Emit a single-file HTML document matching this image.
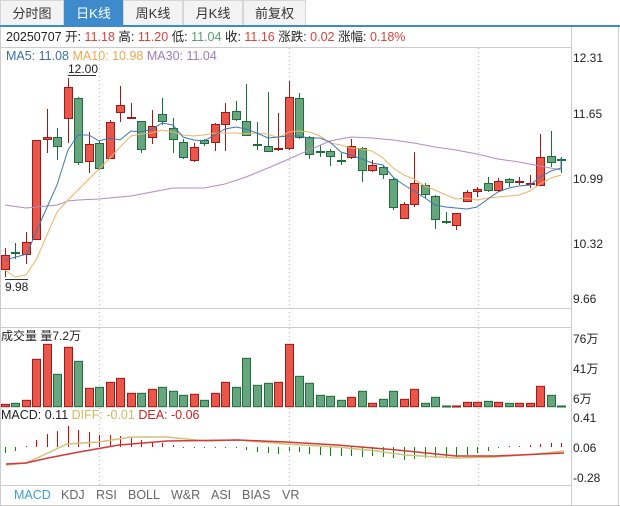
<!DOCTYPE html>
<html><head><meta charset="utf-8"><style>
body{margin:0;width:620px;height:506px;background:#fff;font-family:"Liberation Sans","Noto Sans CJK SC",sans-serif;overflow:hidden;position:relative}
.tab{position:absolute;top:0;height:25px;line-height:25px;text-align:center;font-size:13px;color:#333;background:#f3f3f3;border:1px solid #d6d6d6;border-bottom:none;box-sizing:border-box}
.tab.on{background:#3d8bcb;color:#fff;border-color:#3d8bcb}
#bar{position:absolute;top:25px;left:0;width:620px;height:2px;background:#3d8bcb}
</style></head><body>
<div class="tab" style="left:0;width:64px">分时图</div>
<div class="tab on" style="left:64px;width:59px">日K线</div>
<div class="tab" style="left:123px;width:60px">周K线</div>
<div class="tab" style="left:183px;width:60px">月K线</div>
<div class="tab" style="left:243px;width:63px">前复权</div>
<div id="bar"></div>
<svg id="s" width="620" height="506" style="position:absolute;left:0;top:0" font-family="Liberation Sans, Noto Sans CJK SC, sans-serif"></svg>
<script>
var R='#e8574a',RS='#a01818',G='#66a57e',GS='#1e6e3a';
var C=[[5,'r',255,269,248,277],[15,'g',252,253,243,259],[26,'r',242,254,232,264],[36,'r',140,239,140,239],[47,'r',137,139,109,153],[57,'g',137,146,128,160],[68,'r',87,118,78,143],[78,'g',98,162,97,165],[89,'r',144,161,132,173],[99,'g',143,168,141,170],[110,'r',122,158,120,159],[120,'r',105,112,86,122],[131,'r',117,118,103,118],[141,'g',121,149,121,153],[152,'r',126,137,110,144],[162,'g',114,121,98,125],[173,'g',128,139,118,153],[183,'g',142,157,139,159],[194,'r',147,160,143,162],[204,'g',140,143,139,146],[215,'r',124,142,123,151],[225,'r',112,124,103,151],[236,'g',111,119,101,121],[246,'g',121,135,84,136],[257,'g',144,145,122,150],[268,'g',146,151,92,152],[278,'r',148,149,113,151],[289,'r',97,148,81,150],[299,'g',98,137,93,139],[309,'g',137,154,136,159],[320,'g',151,152,145,157],[330,'g',151,156,149,166],[341,'g',160,161,153,165],[351,'r',146,157,139,159],[362,'g',148,170,147,182],[372,'r',165,170,160,172],[383,'g',167,174,166,179],[393,'g',179,207,178,210],[404,'r',204,218,202,219],[414,'r',183,204,152,207],[425,'g',185,194,183,198],[435,'g',196,219,195,229],[446,'g',221,222,212,224],[456,'r',213,225,213,230],[467,'r',192,201,190,202],[477,'r',189,191,187,197],[488,'g',183,190,177,192],[498,'r',181,190,178,192],[509,'g',179,182,178,187],[519,'r',181,182,177,185],[530,'r',183,184,175,188],[540,'r',157,185,134,186],[551,'g',156,162,131,167],[561,'g',159,160,157,173]];
var V=[['r',253],['g',250],['r',241],['r',118],['r',73],['g',163],['r',82],['g',124],['r',205],['g',202],['r',187],['r',175],['r',220],['g',220],['r',208],['g',202],['g',214],['g',226],['r',223],['g',241],['r',220],['r',187],['g',202],['g',115],['g',196],['g',190],['r',187],['r',73],['g',169],['g',190],['g',226],['g',229],['g',241],['r',232],['g',214],['r',250],['g',238],['g',214],['r',238],['r',208],['g',250],['g',232],['g',258],['r',258],['r',247],['r',247],['g',244],['r',247],['g',250],['r',250],['r',250],['r',199],['g',226],['g',258]];
var M=[-6,-4,1,7,13,16,21,17,15,12,12,11,9,7,5,4,2,-1,-1,-1,-1,-1,-1,-3,-5,-6,-7,-4,-5,-7,-8,-9,-9,-9,-10,-9,-10,-11,-13,-12,-11,-11,-11,-10,-8,-6,-4,-1,1,1,2,3,4,4];
var h='';
function L(x1,y1,x2,y2,c,d){h+='<line x1="'+x1+'" y1="'+y1+'" x2="'+x2+'" y2="'+y2+'" stroke="'+c+'" stroke-width="1"'+(d?' stroke-dasharray="1,3"':'')+'/>';}
function T(x,y,t,c,s,a){h+='<text x="'+x+'" y="'+y+'" fill="'+c+'" font-size="'+(s||12)+'"'+(a?' text-anchor="'+a+'"':'')+'>'+t+'</text>';}
// frame
L(0.5,27,0.5,506,'#ccc');L(618.5,27,618.5,506,'#ccc');L(571.5,27,571.5,506,'#ccc');
L(0,47.5,571,47.5,'#ccc');L(0,308.5,571,308.5,'#ccc');L(0,327.5,571,327.5,'#ccc');L(0,485.5,571,485.5,'#ccc');L(0,505.5,620,505.5,'#ccc');
[99.5,289.5,478.5].forEach(function(x){L(x,48,x,485,'#bbb',1);});
// candles
C.forEach(function(c){var col=c[1]=='r'?R:G,st=c[1]=='r'?RS:GS;L(c[0]+.5,c[4],c[0]+.5,c[5],st);
var hh=Math.max(c[3]-c[2],1);h+='<rect x="'+(c[0]-3.5)+'" y="'+(c[2]+.5)+'" width="8" height="'+hh+'" fill="'+col+'" stroke="'+st+'"/>';});
function P(pts,c,w){h+='<polyline fill="none" stroke="'+c+'" stroke-width="'+(w||1)+'" points="'+pts+'"/>';}
P('5,205 26,208 47,206 57,205 68,201 78,200 99,199 131,196 152,192 173,188 204,188 225,184 246,177 268,168 289,159 309,150 330,141 351,137 372,138 393,140 414,143 435,147 456,150 477,154 498,159 519,162 540,166 561,170','#b38bc6');
P('5,270 15,277 26,275 36,260 47,235 57,212 68,200 78,190 89,179 99,169 110,158 120,147 131,136 141,134 152,133 162,130 173,132 183,135 194,136 204,135 215,133 225,133 236,133 246,134 257,133 268,134 278,138 289,132 299,131 309,132 320,136 330,143 341,145 351,148 362,149 372,151 383,158 393,168 404,175 414,179 425,186 435,190 446,195 456,199 467,198 477,200 488,198 498,197 509,196 519,195 530,191 540,184 551,178 561,175','#f0b266');
P('5,260 27,254 36,232 57,185 68,150 78,135 89,135 99,141 110,138 120,140 131,131 141,132 152,129 162,123 173,125 183,137 194,140 204,141 215,135 225,129 236,127 246,129 257,133 268,138 278,137 289,136 299,136 309,138 320,138 330,142 341,152 351,155 362,159 372,163 383,165 393,177 404,185 414,191 425,198 435,205 446,207 456,208 467,209 477,207 488,199 498,192 509,188 519,186 530,185 540,177 551,171 561,168 561,158','#3a78b0');
L(68,75.5,96,75.5,'#333');T(68,73,'12.00','#222',12);L(5,279.5,28,279.5,'#333');T(5,291,'9.98','#222',12);
// volume
V.forEach(function(v,i){var x=C[i][0],y=320+v[1]/3,hh=Math.max(406.7-y,1);h+='<rect x="'+(x-3.5)+'" y="'+y+'" width="8" height="'+hh+'" fill="'+(v[0]=='r'?R:G)+'" stroke="'+(v[0]=='r'?RS:GS)+'"/>';});
// macd
M.forEach(function(m,i){var x=C[i][0]+.5;L(x,447,x,447-m,m>0?'#e00':'#080');});
P('6,465 26,463 48,453 67,444 99,442 131,437 167,437 206,441 238,440 286,444 337,447 377,451 405,455 456,458 496,457 536,454 564,451','#cfc27a',1.5);
P('6,464 26,463 48,458 79,452 119,445 167,441 238,440 286,442 337,445 397,450 456,456 496,456 564,453','#d23a3a',1.5);
// texts
T(6,41,'20250707 开: <tspan fill="#e0403a">11.18</tspan> 高: <tspan fill="#e0403a">11.20</tspan> 低: <tspan fill="#5a9a72">11.04</tspan> 收: <tspan fill="#e0403a">11.16</tspan> 涨跌: <tspan fill="#e0403a">0.02</tspan> 涨幅: <tspan fill="#e0403a">0.18%</tspan>','#222',12.5);
T(6,60,'<tspan fill="#3a70a8">MA5: 11.08</tspan> <tspan fill="#f0a850">MA10: 10.98</tspan> <tspan fill="#a07ab8">MA30: 11.04</tspan>','#222',12.5);
T(1,340,'成交量 量7.2万','#222',12);
T(1,419,'MACD: 0.11 <tspan fill="#c8bc60">DIFF: -0.01</tspan> <tspan fill="#d02020">DEA: -0.06</tspan>','#222',12.5);
[['12.31',62],['11.65',118],['10.99',183],['10.32',248],['9.66',303],['76万',343],['41万',373],['6万',403],['0.41',422],['0.06',452],['-0.28',482]].forEach(function(a){T(573,a[1],a[0],'#222',12);});
[['MACD',14,'#3a9fd0'],['KDJ',61],['RSI',96],['BOLL',128],['W&amp;R',171],['ASI',211],['BIAS',242],['VR',282]].forEach(function(a){T(a[1],499,a[0],a[2]||'#666',12.5);});
document.getElementById('s').innerHTML=h;
</script>
</body></html>
